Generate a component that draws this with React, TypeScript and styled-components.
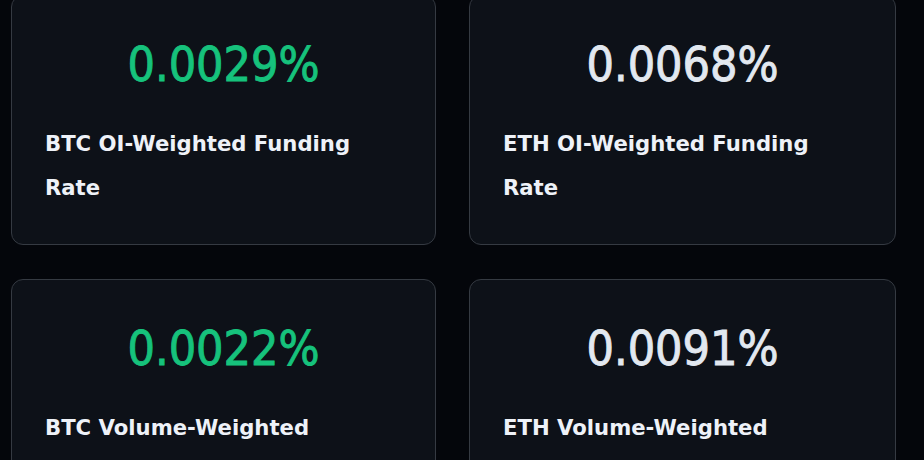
import styled, { createGlobalStyle } from 'styled-components';

const GlobalStyle = createGlobalStyle`
  html, body {
    margin: 0;
    padding: 0;
    background: #04060b;
    overflow: hidden;
  }
`;

const Grid = styled.div`
  display: grid;
  grid-template-columns: 425px 427px;
  column-gap: 33px;
  row-gap: 34px;
  padding: 0 28px 0 11px;
  margin-top: -5px;
`;

const Card = styled.div`
  box-sizing: border-box;
  height: 250px;
  background: #0d1118;
  border: 1px solid #353a42;
  border-radius: 12px;
  padding: 40px 33px 0;
  display: flex;
  flex-direction: column;
`;

const Value = styled.div<{ $positive: boolean }>`
  font-family: 'DejaVu Sans Condensed', 'DejaVu Sans', sans-serif;
  font-size: 48px;
  line-height: 56px;
  text-align: center;
  -webkit-text-stroke: 0.9px currentColor;
  color: ${(props) => (props.$positive ? '#16c27c' : '#e2e8f0')};
`;

const Label = styled.div`
  margin-top: 30px;
  padding-right: 20px;
  font-family: 'DejaVu Sans', sans-serif;
  font-weight: 700;
  font-size: 21.2px;
  line-height: 44px;
  color: #eef2f8;
`;

const rates = [
  { value: '0.0029%', label: 'BTC OI-Weighted Funding Rate', positive: true },
  { value: '0.0068%', label: 'ETH OI-Weighted Funding Rate', positive: false },
  { value: '0.0022%', label: 'BTC Volume-Weighted Funding Rate', positive: true },
  { value: '0.0091%', label: 'ETH Volume-Weighted Funding Rate', positive: false },
];

export default function App() {
  return (
    <>
      <GlobalStyle />
      <Grid>
        {rates.map((r) => (
          <Card key={r.label}>
            <Value $positive={r.positive}>{r.value}</Value>
            <Label>{r.label}</Label>
          </Card>
        ))}
      </Grid>
    </>
  );
}
